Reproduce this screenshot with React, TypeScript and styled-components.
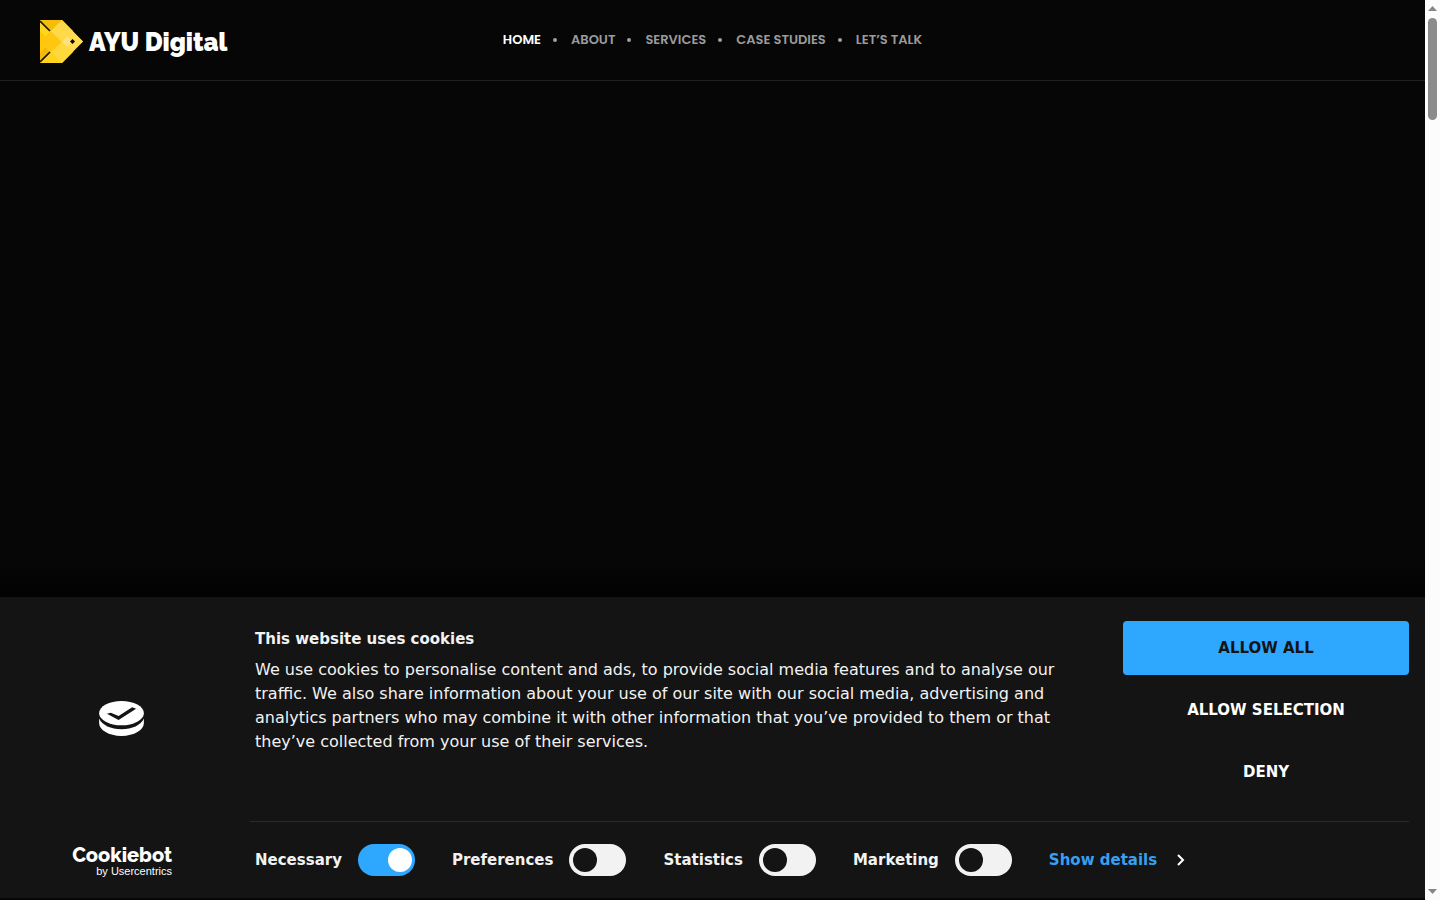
import React from "react";
import styled, { createGlobalStyle } from "styled-components";

const GlobalStyle = createGlobalStyle`
  *, *::before, *::after { box-sizing: border-box; }
  body { margin: 0; background: #060606; }
`;

const Page = styled.div`
  display: grid;
  grid-template-columns: minmax(0, 1fr) 15px;
  min-height: 100vh;
`;

const Site = styled.div`
  display: flex;
  flex-direction: column;
  background: #060606;
`;

const Header = styled.header`
  display: grid;
  grid-template-columns: 1fr auto 1fr;
  height: 81px;
  padding: 0 40px;
  border-bottom: 1px solid #202020;
`;

const Brand = styled.a`
  display: flex;
  align-items: center;
  justify-self: start;
  gap: 6px;
  height: 83px;
  color: #fff;
  font: 900 25px/30px Raleway, Lato, sans-serif;
  text-decoration: none;
`;

const NavList = styled.ul`
  display: flex;
  height: 80px;
  align-items: center;
  margin: 0;
  padding: 0;
  list-style: none;
`;

const NavItem = styled.li`
  display: flex;
  align-items: center;

  & + &::before {
    content: "";
    width: 4px;
    height: 4px;
    margin: 0 14px 0 12px;
    border-radius: 50%;
    background: #a0a0a0;
  }
`;

const NavLink = styled.a<{ $active?: boolean }>`
  color: ${(p) => (p.$active ? "#fff" : "#9b9b9b")};
  font: 600 13px/18px Poppins, Inter, sans-serif;
  text-decoration: none;
`;

const Hero = styled.main`
  flex: 1;
  background: linear-gradient(to top, #020202, #060606 42px);
`;

const Banner = styled.section`
  display: grid;
  grid-template-columns: 250px minmax(0, 1fr);
  padding-right: 16px;
  border-bottom: 2px solid #0c0508;
  background: #141414;
  color: #f2f2f2;
  font-family: "DejaVu Sans", sans-serif;
  font-size: 15px;
`;

const BannerLogo = styled.div`
  display: grid;
  place-items: center;
  padding: 18px 7px 0 0;
`;

const BannerBody = styled.div`
  display: grid;
  grid-template-columns: minmax(0, 1fr) 286px;
  gap: 64px;
  height: 224px;
  padding: 24px 0 0 5px;
`;

const Message = styled.div`
  padding-top: 6px;
`;

const Title = styled.h2`
  margin: 0 0 7px;
  font-size: 15px;
  line-height: 24px;
`;

const Text = styled.p`
  margin: 0;
  font-size: 16px;
  line-height: 24px;
`;

const Actions = styled.div`
  display: flex;
  flex-direction: column;
  gap: 8px;
`;

const Action = styled.button<{ $primary?: boolean }>`
  height: 54px;
  padding: 0;
  border: 0;
  border-radius: 4px;
  background: ${(p) => (p.$primary ? "#2ea7ff" : "transparent")};
  color: ${(p) => (p.$primary ? "#141414" : "#fff")};
  font: 700 15px/24px "DejaVu Sans", sans-serif;
`;

const Vendor = styled.a`
  display: flex;
  flex-direction: column;
  align-items: flex-end;
  justify-content: center;
  padding: 2px 78px 0 0;
  color: #fff;
  text-decoration: none;
`;

const VendorName = styled.span`
  font: 800 20px/20px Raleway, Lato, sans-serif;
`;

const VendorBy = styled.span`
  font: 400 11px/12px "Liberation Sans", sans-serif;
`;

const Options = styled.div`
  display: flex;
  align-items: center;
  gap: 37px;
  height: 77px;
  padding-left: 5px;
  border-top: 1px solid #2b2b2b;
`;

const Option = styled.label`
  display: flex;
  align-items: center;
  gap: 16px;
  font-weight: 700;
`;

const Switch = styled.input`
  appearance: none;
  display: flex;
  align-items: center;
  width: 57px;
  height: 32px;
  margin: 0;
  padding: 0 4px;
  border-radius: 16px;
  background: #f2f2f2;

  &::before {
    content: "";
    width: 24px;
    height: 24px;
    border-radius: 50%;
    background: #141414;
  }

  &:checked {
    justify-content: flex-end;
    padding: 0 3px;
    background: #2ea7ff;
  }

  &:checked::before {
    background: #fff;
  }
`;

const Details = styled.a`
  display: flex;
  align-items: center;
  gap: 20px;
  color: #36a0f2;
  font-weight: 700;
  text-decoration: none;
`;

const Scrollbar = styled.div`
  display: flex;
  flex-direction: column;
  align-items: center;
  justify-content: space-between;
  padding: 6px 0;
  background: #fcfcfc;
`;

const ScrollTop = styled.div`
  display: flex;
  flex-direction: column;
  align-items: center;
  gap: 7px;
`;

const Thumb = styled.div`
  width: 9px;
  height: 102px;
  border-radius: 5px;
  background: #8b8b8b;
`;

const FishMark = () => (
  <svg width="43" height="43" viewBox="0 0 43 43" aria-hidden="true">
    <path d="M0 0H22L43 21.5L22 43H0Z" fill="#ffd42e" />
    <path d="M0 0H22L11 11Z" fill="#f4be08" />
    <path d="M0 43H22L11 32Z" fill="#ffd21c" />
    <path d="M0 0L11 11L0 22Z" fill="#ffd61f" />
    <path d="M0 43L11 32L0 22Z" fill="#f2b90a" />
    <path d="M0 11L11 22L0 33Z" fill="#ffc800" />
    <path d="M11 11L22 22L11 33L0 22Z" fill="#ffc70f" />
    <path d="M22 0L33 11L22 22L11 11Z" fill="#ffd94a" />
    <path d="M22 22L33 32L22 43L11 32Z" fill="#ffd83c" />
    <path d="M27 16L33 22L27 27L22 22Z" fill="#ffe27a" />
    <path d="M32 11L43 21.5L32 32L27 27L33 22L27 16Z" fill="#ffdc50" />
    <path d="M0 1L10 11M0 42L10 32" stroke="#151000" strokeWidth="1.6" />
    <path d="M32.5 19L35 21.5L32.5 24L30 21.5Z" fill="#080808" />
  </svg>
);

const CookieMark = () => (
  <svg width="45" height="35" viewBox="0 0 46 36" aria-hidden="true">
    <path d="M0 18C3 25 12 29 23 29S43 25 46 18V23C46 30 36 36 23 36S0 30 0 23Z" fill="#fff" />
    <ellipse cx="23" cy="12.5" rx="23" ry="12.5" fill="#fff" />
    <path d="M8 13L12 12L20 15.5L34 6.5L38 8L20 19.5Z" fill="#141414" />
  </svg>
);

const navigation = ["HOME", "ABOUT", "SERVICES", "CASE STUDIES", "LET’S TALK"];
const categories = ["Necessary", "Preferences", "Statistics", "Marketing"];

export default function App() {
  return (
    <Page>
      <GlobalStyle />
      <Site>
        <Header>
          <Brand href="#home"><FishMark />AYU Digital</Brand>
          <nav aria-label="Main">
            <NavList>
              {navigation.map((name, i) => (
                <NavItem key={name}><NavLink href="#" $active={i === 0}>{name}</NavLink></NavItem>
              ))}
            </NavList>
          </nav>
        </Header>
        <Hero />
        <Banner aria-labelledby="cookie-title">
          <BannerLogo><CookieMark /></BannerLogo>
          <BannerBody>
            <Message>
              <Title id="cookie-title">This website uses cookies</Title>
              <Text>
                We use cookies to personalise content and ads, to provide social media features and to analyse our
                traffic. We also share information about your use of our site with our social media, advertising and
                analytics partners who may combine it with other information that you’ve provided to them or that
                they’ve collected from your use of their services.
              </Text>
            </Message>
            <Actions>
              <Action type="button" $primary>ALLOW ALL</Action>
              <Action type="button">ALLOW SELECTION</Action>
              <Action type="button">DENY</Action>
            </Actions>
          </BannerBody>
          <Vendor href="#cookiebot">
            <VendorName>Cookiebot</VendorName>
            <VendorBy>by Usercentrics</VendorBy>
          </Vendor>
          <Options>
            {categories.map((name, i) => (
              <Option key={name}>
                {name}
                <Switch type="checkbox" defaultChecked={i === 0} disabled={i === 0} />
              </Option>
            ))}
            <Details href="#details">
              Show details
              <svg width="8" height="12" viewBox="0 0 8 12" fill="none" stroke="#fff" strokeWidth="2" aria-hidden="true">
                <path d="M1 1L6 6L1 11" />
              </svg>
            </Details>
          </Options>
        </Banner>
      </Site>
      <Scrollbar aria-hidden="true">
        <ScrollTop>
          <svg width="9" height="5" viewBox="0 0 9 5"><path d="M0 5L4.5 0L9 5Z" fill="#858585" /></svg>
          <Thumb />
        </ScrollTop>
        <svg width="9" height="5" viewBox="0 0 9 5"><path d="M0 0L4.5 5L9 0Z" fill="#858585" /></svg>
      </Scrollbar>
    </Page>
  );
}
